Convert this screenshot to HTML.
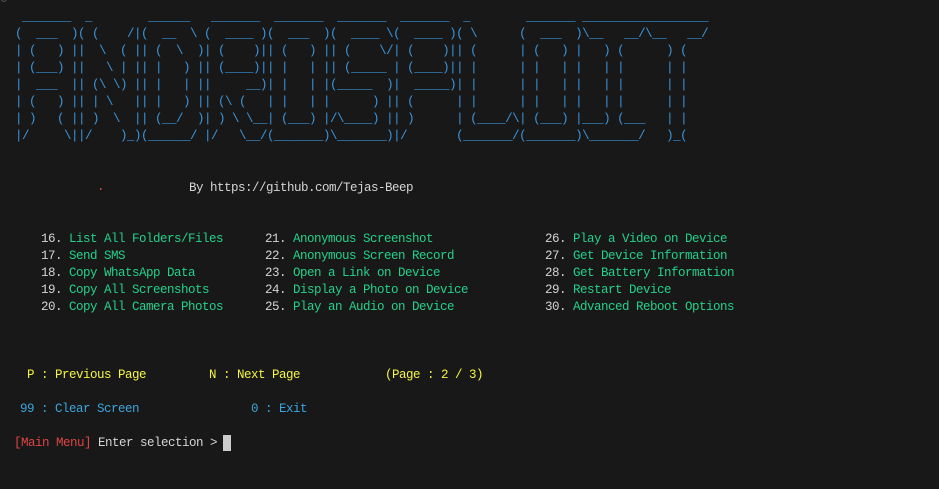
<!DOCTYPE html>
<html><head><meta charset="utf-8"><style>
html,body{margin:0;padding:0;background:#181818;width:939px;height:489px;overflow:hidden}
body{position:relative;font-family:"Liberation Mono",monospace;font-size:12.5px;letter-spacing:-0.5px}
pre{margin:0;font-family:inherit;font-size:inherit;letter-spacing:inherit}
.art{position:absolute;left:15px;top:9px;line-height:17px;color:#3a96dd}
.t{position:absolute;white-space:pre;line-height:17px}
.w{color:#d4d4d4}.g{color:#23d18b}.y{color:#f5f543}.c{color:#3aa6dd}.r{color:#e04444}
</style></head><body>
<div class="t" style="left:0;top:-9px;color:#555">0</div>
<pre class="art"> _______  _        ______   _______  _______  _______  _______  _        _______ __________________
(  ___  )( (    /|(  __  \ (  ____ )(  ___  )(  ____ \(  ____ )( \      (  ___  )\__   __/\__   __/
| (   ) ||  \  ( || (  \  )| (    )|| (   ) || (    \/| (    )|| (      | (   ) |   ) (      ) (   
| (___) ||   \ | || |   ) || (____)|| |   | || (_____ | (____)|| |      | |   | |   | |      | |   
|  ___  || (\ \) || |   | ||     __)| |   | |(_____  )|  _____)| |      | |   | |   | |      | |   
| (   ) || | \   || |   ) || (\ (   | |   | |      ) || (      | |      | |   | |   | |      | |   
| )   ( || )  \  || (__/  )| ) \ \__| (___) |/\____) || )      | (____/\| (___) |___) (___   | |   
|/     \||/    )_)(______/ |/   \__/(_______)\_______)|/       (_______/(_______)\_______/   )_(   </pre>
<div class="t r" style="left:97px;top:179px">.</div>
<div class="t w" style="left:189px;top:180px">By https://github.com/Tejas-Beep</div>

<div class="t" style="left:41px;top:231px"><span class="w">16.</span> <span class="g">List All Folders/Files</span></div>
<div class="t" style="left:41px;top:248px"><span class="w">17.</span> <span class="g">Send SMS</span></div>
<div class="t" style="left:41px;top:265px"><span class="w">18.</span> <span class="g">Copy WhatsApp Data</span></div>
<div class="t" style="left:41px;top:282px"><span class="w">19.</span> <span class="g">Copy All Screenshots</span></div>
<div class="t" style="left:41px;top:299px"><span class="w">20.</span> <span class="g">Copy All Camera Photos</span></div>

<div class="t" style="left:265px;top:231px"><span class="w">21.</span> <span class="g">Anonymous Screenshot</span></div>
<div class="t" style="left:265px;top:248px"><span class="w">22.</span> <span class="g">Anonymous Screen Record</span></div>
<div class="t" style="left:265px;top:265px"><span class="w">23.</span> <span class="g">Open a Link on Device</span></div>
<div class="t" style="left:265px;top:282px"><span class="w">24.</span> <span class="g">Display a Photo on Device</span></div>
<div class="t" style="left:265px;top:299px"><span class="w">25.</span> <span class="g">Play an Audio on Device</span></div>

<div class="t" style="left:545px;top:231px"><span class="w">26.</span> <span class="g">Play a Video on Device</span></div>
<div class="t" style="left:545px;top:248px"><span class="w">27.</span> <span class="g">Get Device Information</span></div>
<div class="t" style="left:545px;top:265px"><span class="w">28.</span> <span class="g">Get Battery Information</span></div>
<div class="t" style="left:545px;top:282px"><span class="w">29.</span> <span class="g">Restart Device</span></div>
<div class="t" style="left:545px;top:299px"><span class="w">30.</span> <span class="g">Advanced Reboot Options</span></div>

<div class="t y" style="left:27px;top:367px">P : Previous Page</div>
<div class="t y" style="left:209px;top:367px">N : Next Page</div>
<div class="t y" style="left:385px;top:367px">(Page : 2 / 3)</div>

<div class="t c" style="left:20px;top:401px">99 : Clear Screen</div>
<div class="t c" style="left:251px;top:401px">0 : Exit</div>

<div class="t" style="left:14px;top:435px"><span class="r">[Main Menu]</span> <span class="w">Enter selection &gt;</span></div>
<div style="position:absolute;left:223px;top:435px;width:8px;height:16px;background:#cccccc"></div>
</body></html>
